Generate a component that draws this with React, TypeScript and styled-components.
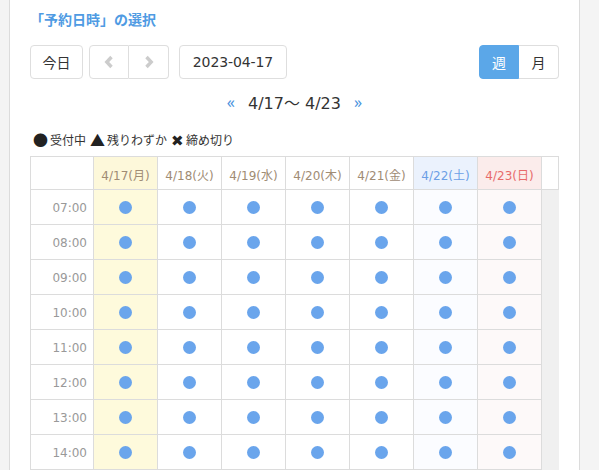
import React from "react";
import styled, { createGlobalStyle } from "styled-components";

const Global = createGlobalStyle`
  html, body { margin: 0; padding: 0; height: 100%; overflow: hidden; background: #f4f4f4; }
  body { font-family: "DejaVu Sans", "Noto Sans CJK JP", sans-serif; color: #333; }
  * { box-sizing: border-box; }
`;

const Page = styled.div`
  padding-left: 9px;
  height: 470px;
`;

const Panel = styled.div`
  width: 571px;
  height: 100%;
  background: #fff;
  border-left: 1px solid #dcdcdc;
  border-right: 1px solid #dcdcdc;
  padding: 9px 20px 0 20px;
`;

const Title = styled.div`
  font-family: "Noto Sans CJK JP", sans-serif;
  font-size: 14px;
  font-weight: 700;
  color: #4f9be3;
  line-height: 20px;
  height: 20px;
  margin-bottom: 16px;
`;

const Toolbar = styled.div`
  display: flex;
  align-items: center;
  height: 34px;
`;

const Btn = styled.button<{ $w: number; $active?: boolean }>`
  width: ${(p) => p.$w}px;
  height: 34px;
  border: 1px solid #dedede;
  background: ${(p) => (p.$active ? "#5ba7e8" : "#fff")};
  color: ${(p) => (p.$active ? "#fff" : "#333")};
  font-family: "DejaVu Sans", "Noto Sans CJK JP", sans-serif;
  font-size: 14px;
  padding: 0;
  border-radius: 4px;
  display: flex;
  align-items: center;
  justify-content: center;
  ${(p) => (p.$active ? "border-color: #5ba7e8;" : "")}
`;

const Group = styled.div<{ $ml: number }>`
  display: flex;
  margin-left: ${(p) => p.$ml}px;
  & > button { border-radius: 0; }
  & > button:first-child { border-radius: 4px 0 0 4px; }
  & > button:last-child { border-radius: 0 4px 4px 0; border-left: none; }
`;

const DateBtn = styled(Btn)`
  margin-left: 10px;
  letter-spacing: -0.1px;
`;

const Spacer = styled.div`
  flex: 1;
`;

const WeekNav = styled.div`
  display: flex;
  justify-content: center;
  align-items: center;
  gap: 13px;
  height: 22px;
  margin-top: 12px;
  font-size: 16px;
`;

const Arrow = styled.span`
  color: #4a93dd;
  font-size: 16px;
  font-family: "Noto Sans", sans-serif;
`;

const Range = styled.span`
  color: #333;
  font-family: "DejaVu Sans", "Noto Sans CJK JP", sans-serif;
`;

const Legend = styled.div`
  display: flex;
  align-items: center;
  margin-top: 16px;
  height: 21px;
  margin-bottom: 6px;
  padding-left: 3px;
  font-family: "Noto Sans CJK JP", sans-serif;
  font-size: 12px;
  color: #333;
`;

const LegendItem = styled.span`
  display: flex;
  align-items: center;
  margin-right: 4px;
`;

const Sym = styled.span`
  font-size: 15px;
  color: #222;
  margin-right: 2px;
  line-height: 1;
`;

const Grid = styled.div`
  display: grid;
  grid-template-columns: 63px repeat(7, 64px) 17px;
  grid-auto-rows: 35px;
  grid-template-rows: 33px;
  border-top: 1px solid #dcdcdc;
  border-left: 1px solid #dcdcdc;
  width: 529px;
`;

type Kind = "normal" | "today" | "sat" | "sun";

const headBg: Record<Kind, string> = {
  normal: "#fff",
  today: "#fdf8da",
  sat: "#ebf2fd",
  sun: "#fbeceb",
};
const bodyBg: Record<Kind, string> = {
  normal: "#fff",
  today: "#fefadc",
  sat: "#fbfcff",
  sun: "#fdf9f9",
};
const headColor: Record<Kind, string> = {
  normal: "#a08c74",
  today: "#a08c74",
  sat: "#6c9fe6",
  sun: "#e86a6a",
};

const HeadCell = styled.div<{ $kind: Kind }>`
  background: ${(p) => headBg[p.$kind]};
  color: ${(p) => headColor[p.$kind]};
  border-right: 1px solid #dcdcdc;
  border-bottom: 1px solid #dcdcdc;
  display: flex;
  align-items: center;
  justify-content: center;
  font-size: 12px;
  padding-top: 2px;
`;

const Corner = styled.div`
  border-right: 1px solid #dcdcdc;
  border-bottom: 1px solid #dcdcdc;
`;

const TimeCell = styled.div`
  border-right: 1px solid #dcdcdc;
  border-bottom: 1px solid #dcdcdc;
  color: #999;
  font-size: 12px;
  display: flex;
  align-items: center;
  justify-content: flex-end;
  padding-right: 6px;
  padding-top: 2px;
`;

const SlotCell = styled.div<{ $kind: Kind }>`
  background: ${(p) => bodyBg[p.$kind]};
  border-right: 1px solid #dcdcdc;
  border-bottom: 1px solid #dcdcdc;
  display: flex;
  align-items: center;
  justify-content: center;
`;

const Dot = styled.span`
  width: 13px;
  height: 13px;
  border-radius: 50%;
  background: #6aa5ec;
  display: block;
`;

const Track = styled.div`
  background: #f0f0f0;
`;

const Chevron = ({ dir }: { dir: "left" | "right" }) => (
  <svg width="10" height="14" viewBox="0 0 10 14">
    <polyline
      points={dir === "left" ? "7.5,2 2.8,7 7.5,12" : "2.5,2 7.2,7 2.5,12"}
      fill="none"
      stroke="#cccccc"
      strokeWidth="3.4"
      strokeLinecap="butt"
      strokeLinejoin="miter"
    />
  </svg>
);

const days: { label: string; kind: Kind }[] = [
  { label: "4/17(月)", kind: "today" },
  { label: "4/18(火)", kind: "normal" },
  { label: "4/19(水)", kind: "normal" },
  { label: "4/20(木)", kind: "normal" },
  { label: "4/21(金)", kind: "normal" },
  { label: "4/22(土)", kind: "sat" },
  { label: "4/23(日)", kind: "sun" },
];

const times = ["07:00", "08:00", "09:00", "10:00", "11:00", "12:00", "13:00", "14:00"];

export default function App() {
  return (
    <>
      <Global />
      <Page>
        <Panel>
          <Title>「予約日時」の選択</Title>
          <Toolbar>
            <Btn $w={53}>今日</Btn>
            <Group $ml={6}>
              <Btn $w={40}>
                <Chevron dir="left" />
              </Btn>
              <Btn $w={40}>
                <Chevron dir="right" />
              </Btn>
            </Group>
            <DateBtn $w={108}>2023-04-17</DateBtn>
            <Spacer />
            <Group $ml={0}>
              <Btn $w={40} $active>週</Btn>
              <Btn $w={40}>月</Btn>
            </Group>
          </Toolbar>
          <WeekNav>
            <Arrow>«</Arrow>
            <Range>4/17～ 4/23</Range>
            <Arrow>»</Arrow>
          </WeekNav>
          <Legend>
            <LegendItem>
              <Sym>●</Sym>受付中
            </LegendItem>
            <LegendItem>
              <Sym>▲</Sym>残りわずか
            </LegendItem>
            <LegendItem>
              <Sym>✖</Sym>締め切り
            </LegendItem>
          </Legend>
          <Grid>
            <Corner />
            {days.map((d) => (
              <HeadCell key={d.label} $kind={d.kind}>
                {d.label}
              </HeadCell>
            ))}
            <Corner />
            {times.map((t) => (
              <React.Fragment key={t}>
                <TimeCell>{t}</TimeCell>
                {days.map((d) => (
                  <SlotCell key={d.label} $kind={d.kind}>
                    <Dot />
                  </SlotCell>
                ))}
                <Track />
              </React.Fragment>
            ))}
          </Grid>
        </Panel>
      </Page>
    </>
  );
}
